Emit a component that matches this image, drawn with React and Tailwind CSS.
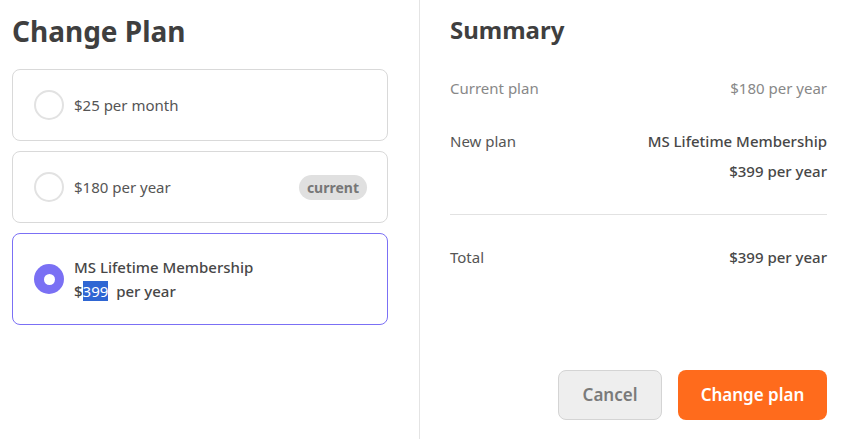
import React, { useState } from 'react';

const plans = [
  { id: 'monthly', label: '$25 per month' },
  { id: 'yearly', label: '$180 per year', current: true },
  { id: 'lifetime', title: 'MS Lifetime Membership' },
];

function Radio({ checked }) {
  if (checked) {
    return (
      <span className="flex h-[30px] w-[30px] shrink-0 items-center justify-center rounded-full bg-[#7a70f4]">
        <span className="h-[11px] w-[11px] rounded-full bg-white" />
      </span>
    );
  }
  return <span className="h-[30px] w-[30px] shrink-0 rounded-full border-2 border-[#e2e2e2] bg-white" />;
}

export default function App() {
  const [selected, setSelected] = useState('lifetime');

  return (
    <div className="flex h-screen w-full bg-white text-[#4a4a4a]" style={{ fontFamily: '"Noto Sans", "Open Sans", sans-serif' }}>
      {/* left: plan picker */}
      <div className="w-[420px] shrink-0 border-r border-[#e4e4e4] pl-3 pr-[31px] pt-3">
        <h1 className="text-[28px] font-bold leading-[38px] text-[#3f3f3f]">Change Plan</h1>
        <div className="mt-[19px] flex flex-col gap-[10px]">
          {plans.map((p) => {
            const checked = selected === p.id;
            return (
              <div
                key={p.id}
                onClick={() => setSelected(p.id)}
                className={
                  'flex cursor-pointer items-center rounded-lg border bg-white pl-[21px] pr-5 ' +
                  (checked ? 'h-[92px] border-[#7b70f5]' : 'h-[72px] border-[#d9d9d9]')
                }
              >
                <Radio checked={checked} />
                {p.title ? (
                  <div className="ml-[10px] flex flex-col text-[15px] leading-6 font-medium text-[#474747]">
                    <span>{p.title}</span>
                    <span>
                      $<span className="bg-[#2f66d3] font-normal text-white">399</span>&nbsp; per year
                    </span>
                  </div>
                ) : (
                  <span className="ml-[10px] text-[15px] text-[#555]">{p.label}</span>
                )}
                {p.current && (
                  <span className="ml-auto rounded-full bg-[#e0e0e0] px-2 py-[2px] text-[14px] font-bold text-[#777]">
                    current
                  </span>
                )}
              </div>
            );
          })}
        </div>
      </div>

      {/* right: summary */}
      <div className="flex flex-1 flex-col pl-[30px] pr-[15px] pt-[13px] pb-[19px]">
        <h2 className="text-[24px] font-bold leading-[34px] text-[#3f3f3f]">Summary</h2>
        <div className="mt-[29px] flex justify-between text-[15px] leading-6 text-[#888]">
          <span>Current plan</span>
          <span>$180 per year</span>
        </div>
        <div className="mt-[26px] flex justify-between text-[15px] leading-[30px]">
          <span className="text-[#555]">New plan</span>
          <div className="flex flex-col items-end font-medium text-[#474747]">
            <span>MS Lifetime Membership</span>
            <span>$399 per year</span>
          </div>
        </div>
        <div className="mt-[28px] border-t border-[#e2e2e2]" />
        <div className="mt-[30px] flex justify-between text-[15px] leading-6">
          <span className="text-[#555]">Total</span>
          <span className="font-medium text-[#474747]">$399 per year</span>
        </div>
        <div className="mt-auto flex justify-end gap-4">
          <button className="h-[50px] w-[104px] rounded-lg border border-[#d4d4d4] bg-[#eeeeee] text-[17px] font-semibold text-[#7a7a7a]">
            Cancel
          </button>
          <button className="h-[50px] w-[149px] rounded-lg bg-[#ff6b1c] text-[17px] font-semibold text-white">
            Change plan
          </button>
        </div>
      </div>
    </div>
  );
}
